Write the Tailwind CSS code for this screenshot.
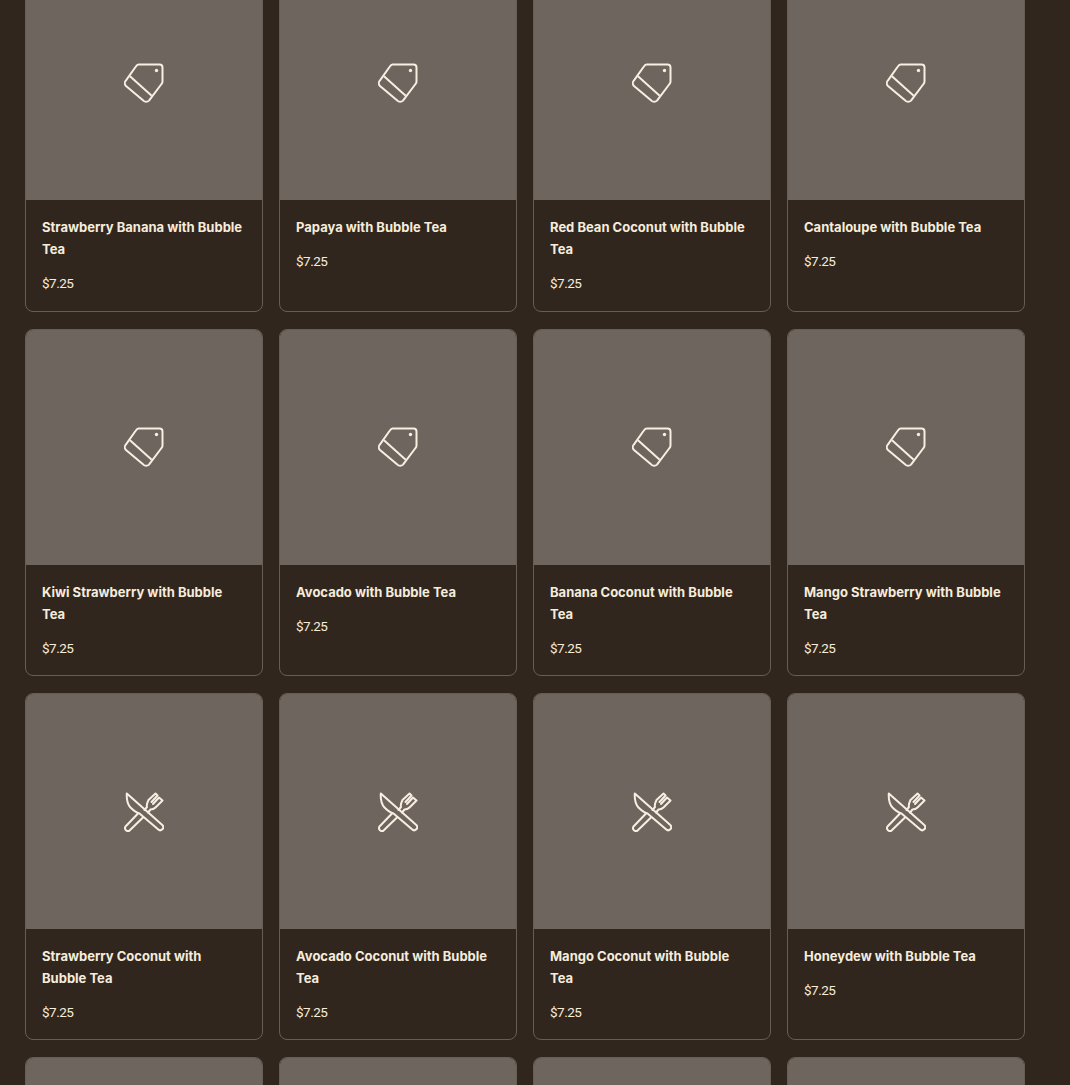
<!DOCTYPE html>
<html lang="en">
<head>
  <meta charset="UTF-8" />
  <title>Bubble Tea Menu</title>
  <script src="https://cdn.jsdelivr.net/npm/@tailwindcss/browser@4"></script>
</head>
<body class="bg-[#30261e] h-[1085px] overflow-hidden">

  <svg class="hidden">
    <symbol id="tag" viewBox="0 0 40 40">
      <path d="M14.5 1.5H35.5a3 3 0 0 1 3 3V18.500a3.500 3.500 0 0 1-1 2.500L25 37.600a4 4 0 0 1-5.700 0L2 23a4 4 0 0 1 0-5.600L11.500 4C12.500 2.500 13.500 1.500 14.500 1.500Z" fill="none" stroke="currentColor" stroke-width="2" stroke-linejoin="round" />
      <path d="M6 13.300L27.700 32.700" fill="none" stroke="currentColor" stroke-width="2" />
      <circle cx="32.500" cy="7.500" r="1.700" fill="currentColor" />
    </symbol>
    <symbol id="utensils" viewBox="0 0 40 40">
      <path d="M2.800 1.500L38.300 33a3 3 0 0 1-4.300 4.300L15.500 21.500C12 20.500 9 18 6.500 15.500C3.500 12 2.500 6 2.800 1.500Z" fill="none" stroke="currentColor" stroke-width="2" stroke-linejoin="round" />
      <path d="M14 21.500L1.500 34.500a3 3 0 0 0 3.800 4.300L19 25.500M24.500 8L31.500 1.500L33.500 3.500L27.500 10M29 12L35 5.500L38.500 8.500L31.500 15.500C30 17 28 17.500 26.500 17.500L24 20.500M24.500 8C23 11 22.500 13.500 23 15L20.500 18" fill="none" stroke="currentColor" stroke-width="2" stroke-linejoin="round" stroke-linecap="round" />
    </symbol>
  </svg>

  <div id="grid" class="grid grid-cols-[repeat(4,238px)] gap-x-4 gap-y-[17px] ml-[25px] -mt-[35.8px]"></div>

  <script>
    const items = [
      ['Strawberry Banana with Bubble Tea', 'tag'],
      ['Papaya with Bubble Tea', 'tag'],
      ['Red Bean Coconut with Bubble Tea', 'tag'],
      ['Cantaloupe with Bubble Tea', 'tag'],
      ['Kiwi Strawberry with Bubble Tea', 'tag'],
      ['Avocado with Bubble Tea', 'tag'],
      ['Banana Coconut with Bubble Tea', 'tag'],
      ['Mango Strawberry with Bubble Tea', 'tag'],
      ['Strawberry Coconut with Bubble Tea', 'utensils'],
      ['Avocado Coconut with Bubble Tea', 'utensils'],
      ['Mango Coconut with Bubble Tea', 'utensils'],
      ['Honeydew with Bubble Tea', 'utensils'],
      // the last row is cut off by the window, only the image tops show
      [null, 'utensils'],
      [null, 'utensils'],
      [null, 'utensils'],
      [null, 'utensils']
    ]

    document.getElementById('grid').innerHTML = items.map(([name, icon]) => `
      <div class="h-[347.4px] border border-[#665d55] rounded-lg overflow-hidden">
        <div class="h-[235.2px] bg-[#6e655e] flex items-center justify-center text-[#f8efe2]">
          <svg class="w-10 h-10"><use href="#${icon}" /></svg>
        </div>
        ${name ? `<div class="p-4">
          <h3 class="font-['Inter',sans-serif] font-bold text-[13px] leading-[22px] text-[#f6ecdc]">${name}</h3>
          <p class="mt-[11.9px] font-['Roboto',sans-serif] text-[13.5px] tracking-[-0.5px] leading-[22px] text-[#f6ecdc]">$7.25</p>
        </div>` : ''}
      </div>`).join('')
  </script>
</body>
</html>
